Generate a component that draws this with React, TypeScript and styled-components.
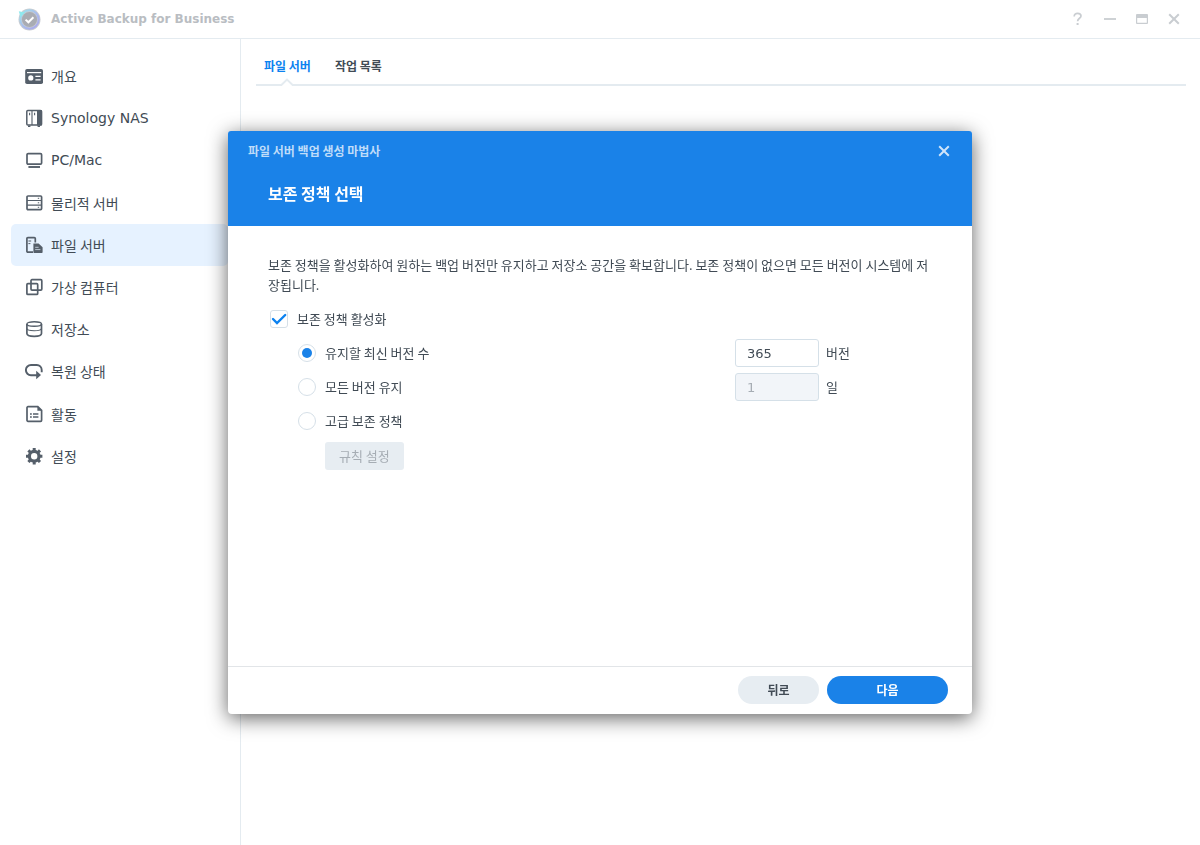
import React, { useId, useState } from "react";
import styled, { createGlobalStyle, css } from "styled-components";

const KR = `"Noto Sans CJK KR", sans-serif`;
const LATIN = `"DejaVu Sans", "Noto Sans CJK KR", sans-serif`;
const INK = "#414b55";
const LINE = "#e4ebf0";
const BLUE = "#1a82e8";

const GlobalStyle = createGlobalStyle`
  * { box-sizing: border-box; }
  body { margin: 0; background: #fff; color: ${INK}; font-family: ${KR}; font-size: 13px; line-height: 20px; }
  button, input { font: inherit; color: inherit; }
`;

const Window = styled.div`
  display: flex;
  flex-direction: column;
  min-height: 100vh;
`;

const TitleBar = styled.header`
  display: flex;
  align-items: center;
  gap: 10px;
  height: 39px;
  padding: 0 18px;
  border-bottom: 1px solid ${LINE};
`;

const AppTitle = styled.h1`
  margin: 0;
  flex: 1;
  font-family: ${LATIN};
  font-size: 12px;
  font-weight: 700;
  color: #b9bdc2;
`;

const WindowControls = styled.div`
  display: flex;
  gap: 16px;
`;

const IconButton = styled.button<{ $color: string }>`
  display: flex;
  align-items: center;
  justify-content: center;
  width: 16px;
  height: 16px;
  padding: 0;
  border: 0;
  background: none;
  color: ${(p) => p.$color};
  cursor: pointer;
`;

const Workspace = styled.div`
  display: flex;
  flex: 1;
`;

const Sidebar = styled.nav`
  flex: 0 0 241px;
  padding: 16px 12px 16px 11px;
  border-right: 1px solid ${LINE};
`;

const NavList = styled.ul`
  display: grid;
  grid-auto-rows: 1fr;
  min-height: 422px;
  margin: 0;
  padding: 0;
  list-style: none;
`;

const NavLink = styled.a<{ $active: boolean; $latin: boolean }>`
  display: flex;
  align-items: center;
  gap: 8px;
  height: 100%;
  padding: 0 14px;
  border-radius: 5px;
  background: ${(p) => (p.$active ? "#e6f2ff" : "transparent")};
  font-family: ${(p) => (p.$latin ? LATIN : KR)};
  font-size: 14px;
  color: ${INK};
  text-decoration: none;

  svg {
    flex: none;
    color: #555f6a;
  }
`;

const Content = styled.main`
  flex: 1;
  padding: 17px 14px 16px 15px;
`;

const Tabs = styled.div`
  display: flex;
  gap: 24px;
  height: 30px;
  padding: 0 8px;
  border-bottom: 2px solid ${LINE};
`;

const Tab = styled.button<{ $active: boolean }>`
  position: relative;
  height: 20px;
  padding: 0;
  border: 0;
  background: none;
  font-size: 12px;
  font-weight: 700;
  white-space: nowrap;
  color: ${(p) => (p.$active ? "#0c82f0" : INK)};
  cursor: pointer;
`;

const TabNotch = styled.svg`
  position: absolute;
  top: 22px;
  left: 50%;
  transform: translateX(-50%);
`;

const Overlay = styled.div`
  position: fixed;
  inset: 0;
  display: flex;
  align-items: center;
  justify-content: center;
`;

const Dialog = styled.section`
  display: flex;
  flex-direction: column;
  width: 62vw;
  min-width: 640px;
  border-radius: 4px;
  background: #fff;
  box-shadow: 0 4px 20px rgba(0, 0, 0, 0.62);
`;

const DialogHeader = styled.header`
  padding: 10px 20px 21px;
  border-radius: 3px 3px 0 0;
  background: ${BLUE};
`;

const DialogBar = styled.div`
  display: flex;
  align-items: center;
  justify-content: space-between;
  height: 20px;
`;

const WizardName = styled.span`
  font-size: 12px;
  font-weight: 700;
  color: #bfdcf9;
`;

const StepTitle = styled.h2`
  margin: 20px 20px 0;
  font-size: 16px;
  line-height: 24px;
  font-weight: 700;
  color: #fff;
`;

const DialogBody = styled.div`
  min-height: 440px;
  padding: 29px 40px;
`;

const Description = styled.p`
  margin: 0 0 7px;
  word-break: break-all;
`;

const OptionRow = styled.div<{ $indent?: boolean }>`
  display: flex;
  align-items: center;
  height: 34px;
  padding-left: ${(p) => (p.$indent ? 30 : 2)}px;
`;

const OptionLabel = styled.label`
  display: flex;
  flex: 1;
  align-items: center;
  gap: 9px;
  cursor: pointer;
`;

const markBox = css`
  appearance: none;
  width: 18px;
  height: 18px;
  margin: 0;
  border: 1px solid #d5dfe7;
  background: #fff;
`;

const CheckWrap = styled.span`
  position: relative;
  display: flex;

  svg {
    position: absolute;
    inset: 0;
    pointer-events: none;
  }
`;

const Checkbox = styled.input`
  ${markBox}
  border-radius: 3px;

  &:not(:checked) + svg {
    display: none;
  }
`;

const Radio = styled.input`
  ${markBox}
  display: grid;
  place-items: center;
  border-radius: 50%;

  &:checked::before {
    content: "";
    width: 10px;
    height: 10px;
    border-radius: 50%;
    background: ${BLUE};
  }
`;

const Amount = styled.div`
  display: flex;
  align-items: center;
  gap: 7px;
  width: 197px;
`;

const NumberField = styled.input`
  width: 84px;
  height: 28px;
  padding: 0 11px;
  border: 1px solid #d5e0e8;
  border-radius: 3px;
  background: #fff;
  font-family: ${LATIN};

  &:disabled {
    background: #f2f5f9;
    color: #a6adb4;
  }
`;

const RuleButton = styled.button`
  display: block;
  height: 28px;
  margin: 4px 0 0 57px;
  padding: 0 14px;
  border: 0;
  border-radius: 3px;
  background: #e7edf2;
  color: #a6adb4;
`;

const DialogFooter = styled.footer`
  display: flex;
  align-items: center;
  justify-content: flex-end;
  gap: 8px;
  padding: 9px 24px 10px;
  border-top: 1px solid #e2e5e8;
`;

const PillButton = styled.button<{ $primary?: boolean }>`
  width: ${(p) => (p.$primary ? 121 : 81)}px;
  height: 28px;
  padding: 0;
  border: 0;
  border-radius: 14px;
  background: ${(p) => (p.$primary ? BLUE : "#e7edf2")};
  color: ${(p) => (p.$primary ? "#fff" : INK)};
  font-size: 12px;
  font-weight: 700;
  cursor: pointer;
`;

const Logo = () => (
  <svg width="23" height="23" viewBox="0 0 23 23" aria-hidden="true">
    <defs>
      <linearGradient id="ring" x1="0" y1="0" x2="1" y2="1">
        <stop offset="0" stopColor="#9be6ee" />
        <stop offset="0.5" stopColor="#a9bdec" />
        <stop offset="1" stopColor="#aaa6ea" />
      </linearGradient>
    </defs>
    <circle cx="11.5" cy="11.5" r="11" fill="#c9ccd1" />
    <circle cx="11.5" cy="11.5" r="9.2" fill="none" stroke="url(#ring)" strokeWidth="2" />
    <circle cx="11.5" cy="11.5" r="7.6" fill="#a9acb3" />
    <path d="M0.8 3.2 7 4.4 2.4 9Z" fill="#8fe9ee" />
    <path d="M7.6 11.6l2.8 2.7 5-5" fill="none" stroke="#fff" strokeWidth="2" />
  </svg>
);

const Glyph = ({ children }: { children: React.ReactNode }) => (
  <svg width="18" height="18" viewBox="0 0 18 18" fill="none" stroke="currentColor" strokeWidth="1.7" aria-hidden="true">
    {children}
  </svg>
);

const icons = {
  overview: (
    <Glyph>
      <rect x="0.2" y="2" width="17.8" height="15" rx="1.8" fill="currentColor" stroke="none" />
      <path d="M2 5.6h14.2" stroke="#fff" strokeWidth="1.2" />
      <circle cx="5.8" cy="10.9" r="2.6" fill="#fff" stroke="none" />
      <path d="M10.4 9.4h5.2M10.4 12.8h5.2" stroke="#fff" strokeWidth="1.2" />
    </Glyph>
  ),
  nas: (
    <Glyph>
      <rect x="1.8" y="1.6" width="14.6" height="14.4" rx="1" strokeWidth="1.5" />
      <path d="M12 1h4a1.2 1.2 0 0 1 1.2 1.2v13.2a1.2 1.2 0 0 1-1.2 1.2h-4z" fill="currentColor" stroke="none" />
      <path d="M7 2v14M4.6 3.8v2.4M9.6 3.8v2.4" strokeWidth="1.1" />
      <path d="M3 17.2h2.4M12.6 17.2H15" strokeWidth="1.6" />
    </Glyph>
  ),
  pc: (
    <Glyph>
      <rect x="2" y="2.600" width="14.6" height="10.6" rx="1.2" />
      <path d="M3.4 16h11.6" strokeWidth="1.9" />
    </Glyph>
  ),
  rack: (
    <Glyph>
      <rect x="2" y="2" width="14.6" height="13.6" rx="1" />
      <path d="M2 6.5h14.6M2 11.1h14.6" strokeWidth="1.2" />
      <path d="M12.8 4.3h1.4M12.8 8.8h1.4M12.8 13.3h1.4" strokeWidth="1" />
    </Glyph>
  ),
  file: (
    <Glyph>
      <path d="M8 16.2H2.9a1 1 0 0 1-1-1V2.600a1 1 0 0 1 1-1h6.400a1 1 0 0 1 1 1v4" />
      <path d="M3.400 5h2.800M3.400 7.600h2" strokeWidth="1" />
      <path d="M8.400 7.600h5.200l4 3.600v5a.8.8 0 0 1-.8.8H9.200a.8.8 0 0 1-.8-.8z" fill="currentColor" stroke="none" />
      <path d="M10.200 11.300h3.400M10.200 13.600h5.200" stroke="#e6f2ff" strokeWidth=".7" />
    </Glyph>
  ),
  virtual: (
    <Glyph>
      <rect x="6" y="1.7" width="10.8" height="10.4" rx="1" />
      <rect x="1.900" y="5.700" width="10.800" height="10.700" rx="1" />
    </Glyph>
  ),
  storage: (
    <Glyph>
      <path d="M1.900 4v9.600c0 1.700 3.200 2.800 7.300 2.800s7.300-1.100 7.300-2.800V4" />
      <ellipse cx="9.200" cy="4" rx="7.300" ry="2.300" strokeWidth="1.500" />
      <path d="M1.900 8.600c0 1.300 3.200 2.200 7.300 2.200s7.300-.9 7.300-2.200" strokeWidth="1.100" />
    </Glyph>
  ),
  restore: (
    <Glyph>
      <path d="M12 13.200H6a5 5 0 0 1 0-10.200h5.800a4.900 4.900 0 0 1 4.900 4.900v2.400" strokeWidth="1.900" />
      <path d="M11.200 8.800v8.400l4.800-4.200z" fill="currentColor" stroke="none" />
    </Glyph>
  ),
  activity: (
    <Glyph>
      <path d="M2 2.700a1 1 0 0 1 1-1h9.800l3.800 3.600v10a1 1 0 0 1-1 1H3a1 1 0 0 1-1-1z" />
      <path d="M12.400 1.400v4.400h4.600z" fill="currentColor" stroke="none" />
      <path d="M5 9h1.800M8 9h5.400M5 12h1.800M8 12h5.400" strokeWidth="1.600" />
    </Glyph>
  ),
  settings: (
    <Glyph>
      <circle cx="9.2" cy="9.2" r="4.8" strokeWidth="3.2" />
      <path
        d="M9.200 1v3M9.200 14.400v3M1 9.200h3M14.400 9.200h3M3.400 3.400l2.100 2.100M12.900 12.900l2.100 2.100M3.400 15l2.100-2.100M12.900 5.500L15 3.400"
        strokeWidth="3"
      />
    </Glyph>
  ),
};

type NavItem = { icon: keyof typeof icons; text: string; latin?: boolean };

const navItems: NavItem[] = [
  { icon: "overview", text: "개요" },
  { icon: "nas", text: "Synology NAS", latin: true },
  { icon: "pc", text: "PC/Mac", latin: true },
  { icon: "rack", text: "물리적 서버" },
  { icon: "file", text: "파일 서버" },
  { icon: "virtual", text: "가상 컴퓨터" },
  { icon: "storage", text: "저장소" },
  { icon: "restore", text: "복원 상태" },
  { icon: "activity", text: "활동" },
  { icon: "settings", text: "설정" },
];

const CloseGlyph = () => (
  <svg width="12" height="12" viewBox="0 0 12 12" fill="none" stroke="currentColor" strokeWidth="2" aria-hidden="true">
    <path d="M1.200 1.200l9.600 9.600M10.800 1.200l-9.600 9.600" />
  </svg>
);

const HelpGlyph = () => (
  <svg width="12" height="14" viewBox="0 0 12 14" fill="none" stroke="currentColor" strokeWidth="1.700" aria-hidden="true">
    <path d="M2.200 4.400C2.200 2.400 3.600 1.400 5.600 1.400s3.400 1 3.400 2.700C9 6.300 5.600 6.300 5.600 9.200" />
    <path d="M5.600 11v2" strokeWidth="2" />
  </svg>
);

const MinimizeGlyph = () => (
  <svg width="12" height="12" viewBox="0 0 12 12" stroke="currentColor" strokeWidth="1.800" aria-hidden="true">
    <path d="M0 6h12" />
  </svg>
);

const MaximizeGlyph = () => (
  <svg width="12" height="12" viewBox="0 0 12 12" fill="currentColor" aria-hidden="true">
    <path fillRule="evenodd" d="M1 1h10a1 1 0 0 1 1 1v8a1 1 0 0 1-1 1H1a1 1 0 0 1-1-1V2a1 1 0 0 1 1-1zm.2 4v4.800h9.600V5z" />
  </svg>
);

export default function App() {
  const [enabled, setEnabled] = useState(true);
  const [policy, setPolicy] = useState("latest");
  const [versions, setVersions] = useState("365");
  const [days, setDays] = useState("1");
  const id = useId();

  return (
    <>
      <GlobalStyle />
      <Window>
        <TitleBar>
          <Logo />
          <AppTitle>Active Backup for Business</AppTitle>
          <WindowControls>
            <IconButton $color="#c9cdd1" aria-label="도움말"><HelpGlyph /></IconButton>
            <IconButton $color="#c9cdd1" aria-label="최소화"><MinimizeGlyph /></IconButton>
            <IconButton $color="#c9cdd1" aria-label="최대화"><MaximizeGlyph /></IconButton>
            <IconButton $color="#c9cdd1" aria-label="닫기"><CloseGlyph /></IconButton>
          </WindowControls>
        </TitleBar>
        <Workspace>
          <Sidebar>
            <NavList>
              {navItems.map((item) => (
                <li key={item.text}>
                  <NavLink href="#" $active={item.icon === "file"} $latin={!!item.latin}>
                    {icons[item.icon]}
                    {item.text}
                  </NavLink>
                </li>
              ))}
            </NavList>
          </Sidebar>
          <Content>
            <Tabs>
              <Tab $active>
                파일 서버
                <TabNotch width="16" height="8" viewBox="0 0 16 8" aria-hidden="true">
                  <path d="M2 8V7L8 1l6 6v1z" fill="#fff" />
                  <path d="M0 7h2.400L8 1.600 13.600 7H16" fill="none" stroke={LINE} strokeWidth="2" />
                </TabNotch>
              </Tab>
              <Tab $active={false}>작업 목록</Tab>
            </Tabs>
          </Content>
        </Workspace>
      </Window>

      <Overlay>
        <Dialog role="dialog" aria-labelledby={`${id}-title`}>
          <DialogHeader>
            <DialogBar>
              <WizardName>파일 서버 백업 생성 마법사</WizardName>
              <IconButton $color="#cfe4fa" aria-label="닫기"><CloseGlyph /></IconButton>
            </DialogBar>
            <StepTitle id={`${id}-title`}>보존 정책 선택</StepTitle>
          </DialogHeader>
          <DialogBody>
            <Description>
              보존 정책을 활성화하여 원하는 백업 버전만 유지하고 저장소 공간을 확보합니다. 보존 정책이 없으면 모든 버전이 시스템에 저장됩니다.
            </Description>
            <OptionRow>
              <OptionLabel>
                <CheckWrap>
                  <Checkbox type="checkbox" checked={enabled} onChange={(e) => setEnabled(e.target.checked)} />
                  <svg width="18" height="18" viewBox="0 0 18 18" fill="none" stroke="#0c82f0" strokeWidth="2.400" aria-hidden="true">
                    <path d="M3 9l4 4 8.200-8" strokeLinecap="round" />
                  </svg>
                </CheckWrap>
                보존 정책 활성화
              </OptionLabel>
            </OptionRow>
            <OptionRow $indent>
              <OptionLabel>
                <Radio type="radio" name="policy" checked={policy === "latest"} onChange={() => setPolicy("latest")} />
                유지할 최신 버전 수
              </OptionLabel>
              <Amount>
                <NumberField id={`${id}-v`} value={versions} onChange={(e) => setVersions(e.target.value)} />
                <label htmlFor={`${id}-v`}>버전</label>
              </Amount>
            </OptionRow>
            <OptionRow $indent>
              <OptionLabel>
                <Radio type="radio" name="policy" checked={policy === "all"} onChange={() => setPolicy("all")} />
                모든 버전 유지
              </OptionLabel>
              <Amount>
                <NumberField id={`${id}-d`} value={days} disabled onChange={(e) => setDays(e.target.value)} />
                <label htmlFor={`${id}-d`}>일</label>
              </Amount>
            </OptionRow>
            <OptionRow $indent>
              <OptionLabel>
                <Radio type="radio" name="policy" checked={policy === "advanced"} onChange={() => setPolicy("advanced")} />
                고급 보존 정책
              </OptionLabel>
            </OptionRow>
            <RuleButton disabled>규칙 설정</RuleButton>
          </DialogBody>
          <DialogFooter>
            <PillButton>뒤로</PillButton>
            <PillButton $primary>다음</PillButton>
          </DialogFooter>
        </Dialog>
      </Overlay>
    </>
  );
}
